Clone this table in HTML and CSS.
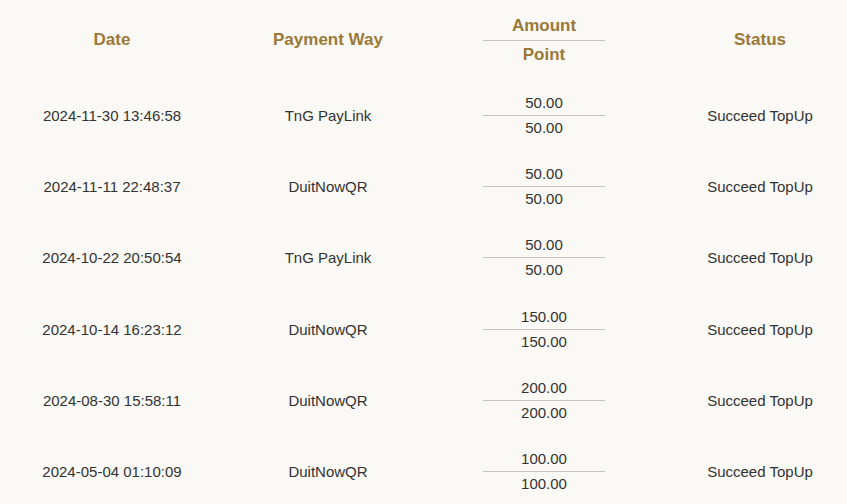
FILE: index.html
```html
<!DOCTYPE html>
<html>
<head>
<meta charset="utf-8">
<link rel="stylesheet" href="styles.css">
</head>
<body>
<div class="table">
  <div class="row head">
    <div class="cell">Date</div>
    <div class="cell">Payment Way</div>
    <div class="cell"><div class="pair"><div class="top">Amount</div><div class="bottom">Point</div></div></div>
    <div class="cell">Status</div>
  </div>
  <div class="row">
    <div class="cell">2024-11-30 13:46:58</div>
    <div class="cell">TnG PayLink</div>
    <div class="cell"><div class="pair"><div class="top">50.00</div><div class="bottom">50.00</div></div></div>
    <div class="cell">Succeed TopUp</div>
  </div>
  <div class="row">
    <div class="cell">2024-11-11 22:48:37</div>
    <div class="cell">DuitNowQR</div>
    <div class="cell"><div class="pair"><div class="top">50.00</div><div class="bottom">50.00</div></div></div>
    <div class="cell">Succeed TopUp</div>
  </div>
  <div class="row">
    <div class="cell">2024-10-22 20:50:54</div>
    <div class="cell">TnG PayLink</div>
    <div class="cell"><div class="pair"><div class="top">50.00</div><div class="bottom">50.00</div></div></div>
    <div class="cell">Succeed TopUp</div>
  </div>
  <div class="row">
    <div class="cell">2024-10-14 16:23:12</div>
    <div class="cell">DuitNowQR</div>
    <div class="cell"><div class="pair"><div class="top">150.00</div><div class="bottom">150.00</div></div></div>
    <div class="cell">Succeed TopUp</div>
  </div>
  <div class="row">
    <div class="cell">2024-08-30 15:58:11</div>
    <div class="cell">DuitNowQR</div>
    <div class="cell"><div class="pair"><div class="top">200.00</div><div class="bottom">200.00</div></div></div>
    <div class="cell">Succeed TopUp</div>
  </div>
  <div class="row">
    <div class="cell">2024-05-04 01:10:09</div>
    <div class="cell">DuitNowQR</div>
    <div class="cell"><div class="pair"><div class="top">100.00</div><div class="bottom">100.00</div></div></div>
    <div class="cell">Succeed TopUp</div>
  </div>
</div>
</body>
</html>
```
FILE: styles.css
```css
html, body {
  margin: 0;
  padding: 0;
  background: #faf9f5;
  overflow: hidden;
}
body {
  font-family: "Liberation Sans", Arial, sans-serif;
  font-size: 15px;
  color: #333333;
}
.table {
  padding-left: 4px;
  width: 864px;
}
.row {
  display: grid;
  grid-template-columns: 216px 216px 216px 216px;
  align-items: center;
  padding: 11.1px 0;
}
.cell {
  text-align: center;
}
.pair {
  width: 122px;
  margin: 0 auto;
}
.top {
  line-height: 24px;
  border-bottom: 1px solid #c4c4c4;
}
.bottom {
  line-height: 24px;
}
.head {
  padding: 12px 0 12px;
  font-size: 17px;
  font-weight: bold;
  color: #9a7838;
}
.head .top {
  line-height: 28px;
}
.head .bottom {
  line-height: 27px;
}
```
